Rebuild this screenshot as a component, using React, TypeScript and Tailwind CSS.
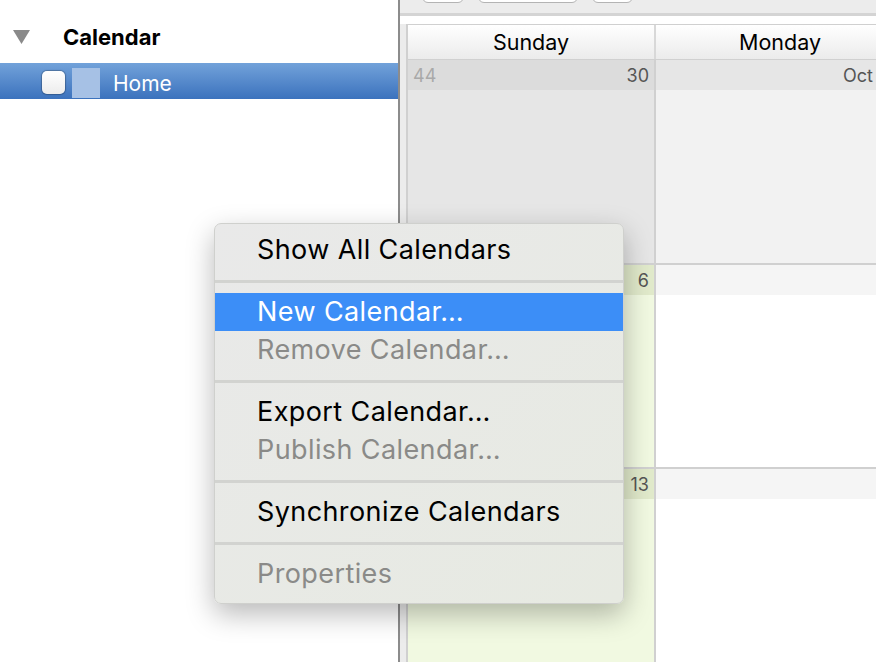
import React from 'react';

const font = { fontFamily: 'Inter, "Liberation Sans", sans-serif' };

type MenuEntry = { label: string; disabled?: boolean; active?: boolean } | 'sep';

const menu: MenuEntry[] = [
  { label: 'Show All Calendars' },
  'sep',
  { label: 'New Calendar…', active: true },
  { label: 'Remove Calendar…', disabled: true },
  'sep',
  { label: 'Export Calendar…' },
  { label: 'Publish Calendar…', disabled: true },
  'sep',
  { label: 'Synchronize Calendars' },
  'sep',
  { label: 'Properties', disabled: true },
];

const Sidebar: React.FC = () => (
  <div className="w-[398px] shrink-0 h-full bg-white flex flex-col pt-[26px]">
    <div className="flex items-center h-[22px] pl-[13px]">
      <svg width="17" height="14" viewBox="0 0 17 14">
        <polygon points="0,0 17,0 8.5,14" fill="#8a8a8a" />
      </svg>
      <span className="ml-[33px] text-[22px] font-bold text-black">Calendar</span>
    </div>
    <div className="mt-[15px] h-[36px] flex items-center bg-gradient-to-b from-[#72a2da] to-[#3b72bd]">
      <div className="ml-[42px] mt-[2px] w-[23px] h-[23px] rounded-[5px] bg-gradient-to-b from-white to-[#ececec] shadow-[0_0_1px_1px_rgba(0,0,0,0.25)]" />
      <div className="ml-[7px] mt-[3px] w-[28px] h-[30px] bg-[#a6c1e5]" />
      <span className="ml-[13px] mt-[5px] text-[21px] text-white">Home</span>
    </div>
  </div>
);

type Cell = { n: string; wk?: string; strip: string; body: string };

const Week: React.FC<{ sun: Cell; mon: Cell; h: string }> = ({ sun, mon, h }) => (
  <div className={`flex ${h}`}>
    <div className={`w-[248px] shrink-0 flex flex-col border-r-2 border-[#d0d0d0] ${sun.body}`}>
      <div className={`h-[30px] flex items-center justify-between px-[5px] text-[18px] ${sun.strip}`}>
        <span className="text-[#a9a9a9]">{sun.wk ?? ''}</span>
        <span className="text-[#555]">{sun.n}</span>
      </div>
    </div>
    <div className={`flex-1 min-w-0 flex flex-col ${mon.body}`}>
      <div className={`h-[30px] flex items-center justify-end pr-[3px] text-[18px] text-[#555] ${mon.strip}`}>
        {mon.n}
      </div>
    </div>
  </div>
);

const CalendarPane: React.FC = () => (
  <div className="flex-1 min-w-0 h-full flex flex-col bg-[#ececec] overflow-hidden">
    <div className="h-[13px] flex gap-[14px] pl-[22px] overflow-hidden">
      <div className="w-[42px] h-[20px] -mt-[17px] rounded-[6px] border border-[#b4b4b4] bg-white" />
      <div className="w-[100px] h-[20px] -mt-[17px] rounded-[6px] border border-[#b4b4b4] bg-white" />
      <div className="w-[41px] h-[20px] -mt-[17px] rounded-[6px] border border-[#b4b4b4] bg-white" />
    </div>
    <div className="h-[3px] bg-[#d4d4d4]" />
    <div className="flex-1 flex bg-white pt-[8px]">
      <div className="w-[6px] shrink-0 bg-[#ececec]" />
      <div className="flex-1 min-w-0 flex flex-col border-l-2 border-t border-[#d0d0d0] overflow-hidden">
        <div className="h-[35px] flex border-b border-[#d0d0d0] bg-gradient-to-b from-white to-[#ebebeb] text-[21.5px] text-black">
          <div className="w-[248px] shrink-0 border-r-2 border-[#d8d8d8] flex items-center justify-center">Sunday</div>
          <div className="w-[248px] shrink-0 flex items-center justify-center">Monday</div>
        </div>
        <Week
          h="h-[203px]"
          sun={{ n: '30', wk: '44', strip: 'bg-[#dcdcdc]', body: 'bg-[#e6e6e6]' }}
          mon={{ n: 'Oct', strip: 'bg-[#e6e6e6]', body: 'bg-[#f2f2f2]' }}
        />
        <div className="h-[2px] bg-[#d0d0d0]" />
        <Week
          h="h-[202px]"
          sun={{ n: '6', strip: 'bg-[#e1eacb]', body: 'bg-[#f1f9e1]' }}
          mon={{ n: '', strip: 'bg-[#f5f5f5]', body: 'bg-white' }}
        />
        <div className="h-[2px] bg-[#d0d0d0]" />
        <Week
          h="flex-1"
          sun={{ n: '13', strip: 'bg-[#e1eacb]', body: 'bg-[#f1f9e1]' }}
          mon={{ n: '', strip: 'bg-[#f5f5f5]', body: 'bg-white' }}
        />
      </div>
    </div>
  </div>
);

const ContextMenu: React.FC = () => (
  <div className="absolute left-[214px] top-[223px] w-[410px] rounded-[7px] bg-gradient-to-br from-[#e9e9e9] to-[#e7eae2] border border-[#cfd0cd] shadow-[0_10px_28px_rgba(0,0,0,0.28)] pt-[7px] pb-[10px]">
    {menu.map((m, i) =>
      m === 'sep' ? (
        <div key={i} className="h-[24px] flex items-center">
          <div className="w-full h-[3px] bg-[#d2d3d0]" />
        </div>
      ) : (
        <div
          key={i}
          className={`h-[38px] flex items-center pl-[42px] text-[27px] tracking-[0.4px] ${
            m.active ? 'bg-[#3c8ef7] text-white' : m.disabled ? 'text-[#8a8a88]' : 'text-black'
          }`}
        >
          {m.label}
        </div>
      )
    )}
  </div>
);

export default function App() {
  return (
    <div className="relative w-[876px] h-[662px] flex overflow-hidden" style={font}>
      <Sidebar />
      <div className="w-[2px] shrink-0 h-full bg-[#8c8c8c]" />
      <CalendarPane />
      <ContextMenu />
    </div>
  );
}
